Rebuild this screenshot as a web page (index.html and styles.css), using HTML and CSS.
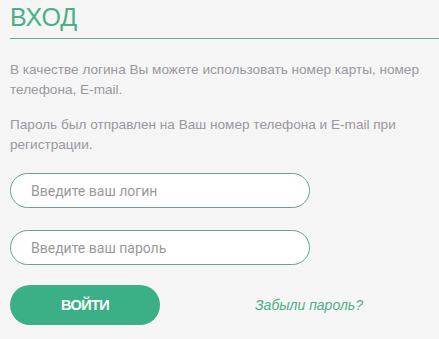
FILE: index.html
```html
<!doctype html>
<html lang="ru">
<head>
  <meta charset="utf-8">
  <title>Вход</title>
  <link rel="stylesheet" href="styles.css">
</head>
<body>
  <div class="login">
    <h1 class="login-title">ВХОД</h1>

    <p class="login-note">В качестве логина Вы можете использовать номер карты, номер телефона, E-mail.</p>
    <p class="login-note">Пароль был отправлен на Ваш номер телефона и E-mail при регистрации.</p>

    <form class="login-form">
      <input class="field" type="text" placeholder="Введите ваш логин">
      <input class="field" type="password" placeholder="Введите ваш пароль">

      <div class="actions">
        <button class="btn" type="button">ВОЙТИ</button>
        <a class="forgot" href="#">Забыли пароль?</a>
      </div>
    </form>
  </div>
</body>
</html>
```

FILE: styles.css
```css
/*----------------------------------------------
 * BASIC RESET
 *----------------------------------------------*/
html, body {
  margin: 0;
  padding: 0;
  background: #f5f5f5;
  font-family: "Liberation Sans", Arial, sans-serif;
}

/*----------------------------------------------
 * LOGIN BLOCK
 *----------------------------------------------*/
.login {
  padding: 0 0 0 10px;
}

.login-title {
  margin: 0;
  padding: 3px 0 7px;
  font-size: 25px;
  font-weight: normal;
  line-height: 28px;
  color: #4caf87;
  border-bottom: 1px solid #6aa88a;
}

.login-note {
  margin: 15px 0 0;
  font-size: 13.6px;
  line-height: 20px;
  color: #9a97a0;
}

.login-title + .login-note {
  margin-top: 21px;
}

/*----------------------------------------------
 * FORM
 *----------------------------------------------*/
.login-form {
  display: flex;
  flex-direction: column;
  gap: 22px;
  padding-top: 18px;
  width: 300px;
}

.field {
  box-sizing: border-box;
  height: 35px;
  padding: 0 20px;
  border: 1px solid #5fa98a;
  border-radius: 18px;
  background: #fff;
  font-family: Roboto, sans-serif;
  font-size: 14px;
  outline: none;
}

.field::placeholder {
  color: #999;
}

.actions {
  display: flex;
  align-items: center;
  width: 429px;
  margin-top: -2px;
}

.btn {
  width: 150px;
  height: 40px;
  border: 0;
  border-radius: 20px;
  background: #3bb087;
  color: #fff;
  font-family: "Liberation Sans", Arial, sans-serif;
  font-weight: bold;
  font-size: 14.5px;
  letter-spacing: -0.6px;
}

.forgot {
  margin-left: 95px;
  font-size: 14px;
  font-style: italic;
  color: #4caf87;
  text-decoration: none;
}
```
